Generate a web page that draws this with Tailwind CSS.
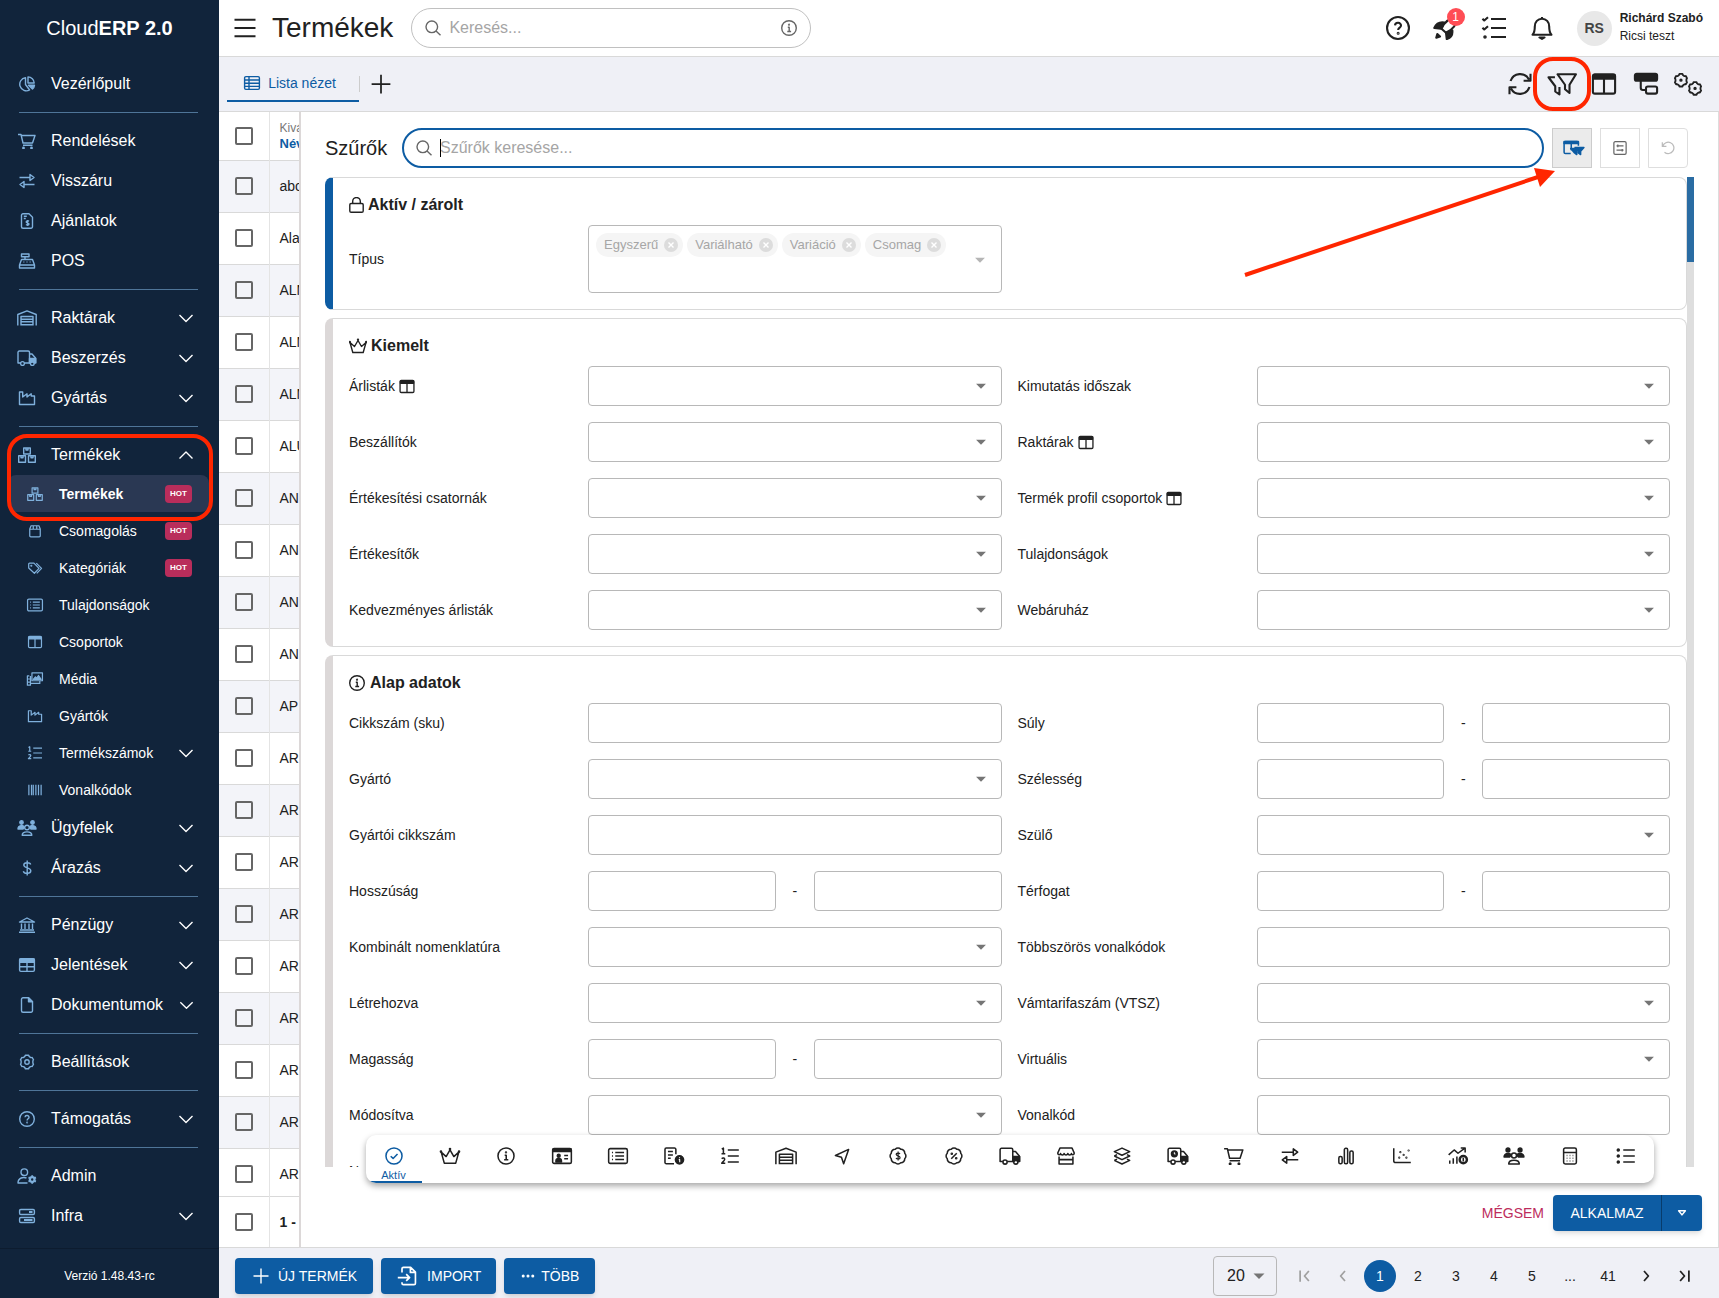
<!DOCTYPE html>
<html lang="hu">
<head>
    <meta charset="UTF-8">
    <meta name="viewport" content="width=device-width, initial-scale=1.0">
    <title>Termékek - CloudERP 2.0</title>
    <script src="https://cdn.jsdelivr.net/npm/@tailwindcss/browser@4"></script>
    <style>
        body {
            font-family: 'Liberation Sans', Arial, sans-serif;
        }
        .f {
            fill: currentColor;
        }
    </style>
</head>
<body class="h-screen flex overflow-hidden bg-white text-sm text-[#212121]">

    <!-- Icon set, every symbol sits on a 20x16 grid -->
    <svg class="hidden" xmlns="http://www.w3.org/2000/svg">
        <symbol id="i-pie" viewBox="0 0 20 16"><path d="M8.5 1.7A6.6 6.6 0 1 0 12.6 14L8.5 8.5z"/><path d="M11 .9V7h6.2A6.2 6.2 0 0 0 11 .9z"/><path class="f" d="M11.5 9.2H17.500a6 6 0 0 1-2 3.900z"/></symbol>
        <symbol id="i-cart" viewBox="0 0 20 16"><path d="M1 1.500h3l2 8.500h9.500l2.500-7.500H4.500M6 12.300h9.500"/><circle class="f" cx="6.500" cy="15" r=".7"/><circle class="f" cx="14.500" cy="15" r=".7"/></symbol>
        <symbol id="i-swap" viewBox="0 0 20 16"><path d="M2.500 4.500h10.500M13 1.500v6l4-3zM17.500 11.500H7M7 8.500v6l-4-3z"/></symbol>
        <symbol id="i-invoice" viewBox="0 0 20 16"><path d="M6 .8h6l3.500 3.400v9.500a1.500 1.500 0 0 1-1.500 1.500H6a1.500 1.500 0 0 1-1.500-1.500V2.300A1.500 1.500 0 0 1 6 .8zM6.800 3.200h3M6.800 5.500h2M12 8.200c-1-.7-2.800-.5-2.800.7s2.800.8 2.800 2.100-2 1.300-3 .5M10.600 7v6"/></symbol>
        <symbol id="i-pos" viewBox="0 0 20 16"><path d="M4.500 1h7.500v2.800H4.500zM8 3.800v2.700M4.500 6.500h11l2 5.500v3h-15v-3zM2.500 12h15M6.500 9h.8M9.600 9h.8M12.700 9h.8"/></symbol>
        <symbol id="i-warehouse" viewBox="0 0 20 16"><path d="M.8 15.500V4.500L10 .9l9.200 3.600v11M4 15.500V6.500h12v9M4.500 9.200h11M4.500 11.800h11M4 14.800h12"/></symbol>
        <symbol id="i-truck" viewBox="0 0 20 16"><path d="M3.500 13H1V2.300A1.300 1.300 0 0 1 2.300 1h8.900a1.300 1.300 0 0 1 1.300 1.300V13H7.500M12.500 4H15l3.500 4v5"/><path class="f" d="M12.500 8.500h6.300V13h-1.500a2.500 2.500 0 0 0-4 0h-.8z"/><circle cx="5.500" cy="13.500" r="1.900"/><circle cx="15.300" cy="13.500" r="1.900"/></symbol>
        <symbol id="i-factory" viewBox="0 0 20 16"><path d="M2.500 14.500V2h3.200v5L10 3.800V7l4.200-3.200V6h3.300v8.500z"/></symbol>
        <symbol id="i-boxes" viewBox="0 0 20 16"><path d="M6.700 1h6.600v6H6.700zM1.700 8.800h6.800v6.400H1.700zM11.500 8.800h6.800v6.400h-6.800zM9 1v2h2V1M4 8.800v2h2v-2M14 8.800v2h2v-2"/></symbol>
        <symbol id="i-package" viewBox="0 0 20 16"><path d="M4 5.800 5.500 2h9L16 5.800v7.700a1.200 1.200 0 0 1-1.200 1.200H5.200A1.200 1.200 0 0 1 4 13.500zM4 6h12M8 6V2.500M12 6V2.500"/></symbol>
        <symbol id="i-tags" viewBox="0 0 20 16"><path d="M2.800 3.500a1 1 0 0 1 1-1h5l5.800 6-5.300 5.500-6.500-6zM11.500 2.500l6 6-5.500 5.700"/><circle class="f" cx="5.800" cy="5.500" r=".5"/></symbol>
        <symbol id="i-listcard" viewBox="0 0 20 16"><rect x="1.500" y="1.300" width="17" height="13.400" rx="1.500"/><path d="M4.500 4.800h1M7.500 4.800h8M4.500 8h1M7.500 8h8M4.500 11.200h1M7.500 11.200h8"/></symbol>
        <symbol id="i-columns" viewBox="0 0 20 16"><rect x="2.600" y="1.600" width="14.800" height="12.800" rx="1.300"/><path class="f" d="M3 2h14v2.500H3z"/><path d="M10 4.500v10"/></symbol>
        <symbol id="i-media" viewBox="0 0 20 16"><path d="M6.500 1h12v9h-12zM3.500 4.500H1.300V15h3.500V4.500M1.300 8h3M1.300 11.500h3M4.800 13H15.500v-3"/><path class="f" d="M8 8.500l2.500-3 1.500 1.500 2-3 3 4.500z"/></symbol>
        <symbol id="i-numbers" viewBox="0 0 20 16"><path d="M8 2.500h10M8 8h10M8 13.500h10M2.500 1.700 4 .8v5M2.300 6h3.400M2.500 10.500c.8-1.200 3-.8 2.600.8-.2.900-1.500 1.900-2.600 3.200h3.200"/></symbol>
        <symbol id="i-barcode" viewBox="0 0 20 16"><path d="M3 2v12M6 2v12M8 2v12M11 2v12M14 2v12M17 2v12"/></symbol>
        <symbol id="i-users" viewBox="0 0 20 16"><circle class="f" cx="4.500" cy="2.500" r="1.700"/><circle class="f" cx="15.500" cy="2.500" r="1.700"/><path class="f" d="M1 9c0-4 6-4.500 6.200-1.500L6 9zM19 9c0-4-6-4.500-6.200-1.500L14 9z"/><circle cx="10" cy="7.500" r="2.300"/><path d="M5.200 15.200c0-4.500 9.600-4.500 9.600 0z"/></symbol>
        <symbol id="i-dollar" viewBox="0 0 20 16"><path d="M13.700 4.500C13 2.300 6.800 1.800 6.800 5c0 3.500 7 2.300 7 5.800 0 3.400-6.800 3.200-7.500.5M10.200.5v15"/></symbol>
        <symbol id="i-bank" viewBox="0 0 20 16"><path d="M2.500 5 10 1l7.500 4zM2 15.200h16M3 13h14M4.500 6.500V12M8 6.500V12M12 6.500V12M15.500 6.500V12"/></symbol>
        <symbol id="i-table" viewBox="0 0 20 16"><rect x="2.600" y="1.600" width="14.800" height="12.800" rx="1.300"/><path class="f" d="M3 2h14v3.200H3z"/><path d="M10 5v9.500M3 9.800h14"/></symbol>
        <symbol id="i-file" viewBox="0 0 20 16"><path d="M6 .8h5.500l4 4v8.900a1.500 1.500 0 0 1-1.500 1.500H6a1.500 1.500 0 0 1-1.500-1.500V2.300A1.500 1.500 0 0 1 6 .8z"/><path class="f" d="M11.500.8v4h4z"/></symbol>
        <symbol id="i-gear" viewBox="0 0 20 16"><path d="M16.500 5.800c-.9.700-.9 3.700 0 4.400l-1.300 2.300c-1.400-.5-3.300.6-3.600 2.300H8.400c-.3-1.700-2.200-2.800-3.600-2.300L3.500 10.200c.9-.7.900-3.700 0-4.400l1.300-2.300c1.400.5 3.300-.6 3.600-2.300h3.200c.3 1.700 2.200 2.800 3.600 2.300z"/><circle cx="10" cy="8" r="2.200"/></symbol>
        <symbol id="i-help" viewBox="0 0 20 16"><circle cx="10" cy="8" r="7.300"/><path d="M8 6.300c.2-2.600 4.200-2.200 4 .2-.1 1.300-1.900 1.300-1.900 2.900"/><circle class="f" cx="10.100" cy="11.500" r=".3"/></symbol>
        <symbol id="i-admin" viewBox="0 0 20 16"><circle cx="7.300" cy="4.200" r="3.300"/><path d="M10.500 15H1c0-5.500 5.500-6.200 8.500-5"/><circle cx="15.200" cy="11.500" r="2.300" stroke-width="2.200"/><path d="M15.200 7.300v1.500M15.200 14.200v1.500M11.500 9.400l1.400.8M17.500 12.800l1.400.8M11.500 13.600l1.400-.8M17.500 10.200l1.400-.8" stroke-width="1.800"/></symbol>
        <symbol id="i-server" viewBox="0 0 20 16"><rect x="2.600" y="1.500" width="14.800" height="5" rx="1.200"/><rect x="2.600" y="9.500" width="14.800" height="5" rx="1.200"/><path d="M12 4h3.500M7 12h8.500" stroke-width="2"/></symbol>
        <symbol id="i-info" viewBox="0 0 20 16"><circle cx="10" cy="8" r="7.300"/><path d="M8.800 7.300h1.400v4M8.300 11.500h3.800"/><circle class="f" cx="10" cy="4.700" r=".4"/></symbol>
        <symbol id="i-search" viewBox="0 0 20 16"><circle cx="8.800" cy="6.800" r="5.800"/><path d="m13 11 4.500 4.300"/></symbol>
        <symbol id="i-menu" viewBox="0 0 20 16"><path d="M3 2.500h14M3 8h14M3 13.500h14"/></symbol>
        <symbol id="i-rocket" viewBox="0 0 20 16"><path d="M7 8.500C9 4 13 1 17.500.8 17.300 5.500 14.500 9 10 11.200z"/><path class="f" d="M8.800 4.300C5.500 3.800 3.500 5 2.200 8l4.500.5zM14.200 9.500c.4 3-1 5-3.700 5.900l-.5-4.200zM3.500 14.500l.7-2.500 1.800 1.700z"/></symbol>
        <symbol id="i-checks" viewBox="0 0 20 16"><path d="M8 2h10M8 8h10M8 14h10M2.300 1.800l1.200 1.200L6 .8M2.300 7.800 3.500 9 6 6.800"/><circle class="f" cx="4" cy="14" r=".5"/></symbol>
        <symbol id="i-bell" viewBox="0 0 20 16"><path d="M3.700 12.500c1.500-1.500 1.500-3 1.500-5.500 0-3 2-5.200 4.800-5.200s4.800 2.200 4.800 5.200c0 2.500 0 4 1.500 5.500zM10 .6v1"/><path class="f" d="M8.300 14.300h3.400l-1.700 1z"/></symbol>
        <symbol id="i-list" viewBox="0 0 20 16"><rect x="2.600" y="1.600" width="14.800" height="12.800" rx="1.300"/><path d="M3 5h14M3 8.200h14M3 11.400h14M7 2v12.500"/></symbol>
        <symbol id="i-plus" viewBox="0 0 20 16"><path d="M10 .5v15M2.500 8h15"/></symbol>
        <symbol id="i-refresh" viewBox="0 0 20 16"><path d="M3.700 6A6.700 6.700 0 0 1 16 5M17 1.200v4.600h-4.600M16.300 10A6.700 6.700 0 0 1 4 11M3 14.800v-4.600h4.600"/></symbol>
        <symbol id="i-filter" viewBox="0 0 20 16"><path d="M7 1.500h12.300L15 8.500V14l-3-2.500v-3zM5.300 3.500H1L5.500 9.500V13l2.800 2V10"/></symbol>
        <symbol id="i-group" viewBox="0 0 20 16"><rect class="f" x="2.600" y="1.200" width="14.800" height="4.600" rx="1.200"/><path d="M6.500 6v4.500a1.500 1.500 0 0 0 1.500 1.500h2"/><rect x="10" y="9.700" width="7.400" height="4.700" rx="1.200"/></symbol>
        <symbol id="i-gears" viewBox="0 0 20 16"><g transform="translate(-.9 .5) scale(.62)" stroke-width="2"><path d="M16.500 5.800c-.9.700-.9 3.700 0 4.400l-1.300 2.300c-1.400-.5-3.300.6-3.600 2.300H8.400c-.3-1.700-2.200-2.800-3.600-2.300L3.500 10.200c.9-.7.900-3.700 0-4.400l1.300-2.300c1.400.5 3.300-.6 3.600-2.300h3.200c.3 1.700 2.200 2.800 3.600 2.300z"/><circle class="f" cx="10" cy="8" r=".8"/></g><g transform="translate(8.500 6) scale(.62)" stroke-width="2"><path d="M16.500 5.800c-.9.700-.9 3.700 0 4.400l-1.300 2.300c-1.400-.5-3.300.6-3.600 2.300H8.400c-.3-1.700-2.200-2.800-3.600-2.300L3.500 10.200c.9-.7.900-3.700 0-4.400l1.300-2.300c1.400.5 3.300-.6 3.600-2.300h3.200c.3 1.700 2.200 2.800 3.600 2.300z"/><circle class="f" cx="10" cy="8" r=".8"/></g></symbol>
        <symbol id="i-colfilter" viewBox="0 0 20 16"><path d="M7 13H2.200A1.200 1.200 0 0 1 1 11.800V3.200A1.200 1.200 0 0 1 2.200 2h10.600A1.200 1.200 0 0 1 14 3.200V6M7.500 4v6"/><path class="f" d="M1 2h13v2H1zM11 7.500h8l-3 3.500v3l-2-1.500V11zM7 8.500h3l2.500 3V14l-2-1.500z"/></symbol>
        <symbol id="i-sliders" viewBox="0 0 20 16"><rect x="3" y=".8" width="14" height="14.400" rx="1.500"/><path d="M6 5.500h8M6 10.500h8M7.500 4v3M12.500 9v3"/></symbol>
        <symbol id="i-undo" viewBox="0 0 20 16"><path d="M3.500 1.500v4.700h4.700M4 6a6.500 6.500 0 1 1 2 6.800"/></symbol>
        <symbol id="i-lock" viewBox="0 0 20 16"><rect x="2.800" y="6.500" width="13.400" height="8.700" rx="1.300"/><path d="M5.700 6.500V4.300a3.800 3.800 0 0 1 7.600 0v2.200"/></symbol>
        <symbol id="i-crown" viewBox="0 0 20 16"><path d="M4.800 14.500 2 4.500l4.500 4L10 2.500l3.500 6 4.500-4-2.800 10z"/><circle class="f" cx="1.800" cy="4" r=".5"/><circle class="f" cx="10" cy="1.600" r=".5"/><circle class="f" cx="18.200" cy="4" r=".5"/></symbol>
        <symbol id="i-check" viewBox="0 0 20 16"><circle cx="10" cy="8" r="7.300"/><path d="m7 8.200 2.200 2 4-4"/></symbol>
        <symbol id="i-idcard" viewBox="0 0 20 16"><rect x="1.500" y="1.300" width="17" height="13.400" rx="1.300"/><path class="f" d="M2 1.500h16V4H2z"/><circle class="f" cx="7" cy="7.800" r="1.300"/><path class="f" d="M4.500 12.500c0-3 5-3 5 0zM4.500 12.500h5v1h-5z"/><path d="M12 7.500h3.500M12 10.500h3.500"/></symbol>
        <symbol id="i-docinfo" viewBox="0 0 20 16"><path d="M10 15H3a1.200 1.200 0 0 1-1.200-1.200V2A1.200 1.200 0 0 1 3 .8h7.500A1.200 1.200 0 0 1 11.700 2v4.500M4.500 4h4.500M4.500 7h4.500M4.500 10H7"/><path class="f" d="M15 7.800a3.700 3.700 0 1 1 0 7.400 3.700 3.700 0 0 1 0-7.400z"/><path stroke="#fff" stroke-width="1" d="M15 9.200v.8M14.300 11.300h.9v2.300"/></symbol>
        <symbol id="i-send" viewBox="0 0 20 16"><path d="M16 2 4 7.500l5.500 1.700L11.500 15z"/></symbol>
        <symbol id="i-badge" viewBox="0 0 20 16"><path d="M16.100 5.500a3.400 3.400 0 0 1 0 5 3.400 3.400 0 0 1-3.600 3.600 3.400 3.400 0 0 1-5 0 3.400 3.400 0 0 1-3.600-3.600 3.400 3.400 0 0 1 0-5 3.400 3.400 0 0 1 3.600-3.600 3.400 3.400 0 0 1 5 0 3.400 3.400 0 0 1 3.600 3.600z"/><path stroke-width="1.100" d="M11.800 6.300C11.300 5 8.300 5 8.300 6.500c0 1.700 3.600 1.200 3.600 3 0 1.600-3.200 1.600-3.700.2M10.100 4v8"/></symbol>
        <symbol id="i-percent" viewBox="0 0 20 16"><path d="M16.100 5.500a3.400 3.400 0 0 1 0 5 3.400 3.400 0 0 1-3.600 3.600 3.400 3.400 0 0 1-5 0 3.400 3.400 0 0 1-3.600-3.600 3.400 3.400 0 0 1 0-5 3.400 3.400 0 0 1 3.600-3.600 3.400 3.400 0 0 1 5 0 3.400 3.400 0 0 1 3.600 3.600zM12.500 5.500l-5 5"/><circle class="f" cx="8" cy="6" r=".5"/><circle class="f" cx="12" cy="10" r=".5"/></symbol>
        <symbol id="i-store" viewBox="0 0 20 16"><path d="M4.500.8h11l2 4.500c-.3 2-2.200 2-2.500.5-.6 1.700-2.800 1.700-3.300 0-.6 1.700-2.800 1.700-3.400 0-.5 1.700-2.700 1.700-3.300 0-.3 1.500-2.200 1.500-2.500-.5zM3.700 8.500v6.700h12.600V8.500M3.700 11.300h12.600"/></symbol>
        <symbol id="i-layers" viewBox="0 0 20 16"><path d="M10 .8 17 4l-7 3.300L3 4zM3 8l7 3.300L17 8l-2.500-1.200M5.500 6.800 3 8M3 12l7 3.300L17 12l-2.500-1.200M5.500 10.800 3 12"/></symbol>
        <symbol id="i-cart-truck" viewBox="0 0 20 16"><path d="M3.500 13H1V2.300A1.300 1.300 0 0 1 2.300 1h8.900a1.300 1.300 0 0 1 1.300 1.300V13H7.500M12.500 4H15l3.500 4v5"/><path class="f" d="M12.500 8.500h6.300V13h-1.500a2.500 2.500 0 0 0-4 0h-.8z"/><circle class="f" cx="6.700" cy="6" r="2.600"/><path stroke="#fff" stroke-width=".9" d="M6.700 4.600v1.600h1"/><circle cx="5.500" cy="13.500" r="1.900"/><circle cx="15.300" cy="13.500" r="1.900"/></symbol>
        <symbol id="i-bars" viewBox="0 0 20 16"><rect x="3.500" y="8.500" width="3" height="6.500" rx="1.300"/><rect x="8.500" y="1" width="3" height="14" rx="1.300"/><rect x="13.500" y="3.500" width="3" height="11.500" rx="1.300"/></symbol>
        <symbol id="i-scatter" viewBox="0 0 20 16"><path d="M2.500 1v11.500A1.500 1.500 0 0 0 4 14h14"/><circle class="f" cx="7.500" cy="9.500" r=".3"/><circle class="f" cx="8.500" cy="4.500" r=".3"/><circle class="f" cx="11.500" cy="7" r=".3"/><circle class="f" cx="14" cy="9.500" r=".3"/><circle class="f" cx="16" cy="3" r=".3"/></symbol>
        <symbol id="i-trend" viewBox="0 0 20 16"><path d="M1.500 7 6.500 2.500l3.500 3 6-4.500M12.500.8h4v4M2.500 12v3M5.700 10v5M9 8.500V15"/><circle cx="14.800" cy="11.300" r="3.300" stroke-width="2.200"/><path d="M14.800 9.500v3.600"/></symbol>
        <symbol id="i-calc" viewBox="0 0 20 16"><rect x="4.200" y=".8" width="11.600" height="14.400" rx="1.500"/><path d="M4.500 4.800h11M7 7.500h.6M9.700 7.500h.6M12.400 7.500h.6M7 10h.6M9.700 10h.6M12.400 10h.6M7 12.500h.6M9.700 12.500h.6M12.400 12.500h.6"/></symbol>
        <symbol id="i-bullets" viewBox="0 0 20 16"><path d="M7.500 2.500h10.500M7.500 8h10.500M7.500 13.500h10.500"/><circle class="f" cx="3" cy="2.500" r=".9"/><circle class="f" cx="3" cy="8" r=".9"/><circle class="f" cx="3" cy="13.500" r=".9"/></symbol>
        <symbol id="i-down" viewBox="0 0 20 16"><path d="m3.500 5 6.500 6.500L16.500 5"/></symbol>
        <symbol id="i-up" viewBox="0 0 20 16"><path d="m3.500 11.500 6.500-6.500 6.500 6.500"/></symbol>
        <symbol id="i-left" viewBox="0 0 20 16"><path d="M12 4 8.500 8l3.500 4"/></symbol>
        <symbol id="i-right" viewBox="0 0 20 16"><path d="M8 4 11.500 8 8 12"/></symbol>
        <symbol id="i-first" viewBox="0 0 20 16"><path d="M6.500 3.500v9M13.500 4 10 8l3.500 4"/></symbol>
        <symbol id="i-last" viewBox="0 0 20 16"><path d="M13.500 3.500v9M6.500 4 10 8l-3.500 4"/></symbol>
        <symbol id="i-import" viewBox="0 0 20 16"><path d="M5 5V2A1.200 1.200 0 0 1 6.200.8h6l4 4V14a1.200 1.200 0 0 1-1.200 1.200H6.200A1.200 1.200 0 0 1 5 14v-.7M1.500 9.300H11M8.500 6.500l2.800 2.800-2.800 2.800M12 1v4h4"/></symbol>
        <symbol id="i-dots" viewBox="0 0 20 16"><circle class="f" cx="4" cy="8" r="1.200"/><circle class="f" cx="10" cy="8" r="1.200"/><circle class="f" cx="16" cy="8" r="1.200"/></symbol>
        <symbol id="i-caret" viewBox="0 0 20 16"><path class="f" stroke="none" d="M4.500 5.500h11L10 11z"/></symbol>
        <symbol id="i-caret-o" viewBox="0 0 20 16"><path d="M5.500 5h9L10 10.500z" stroke-width="2"/></symbol>
    </svg>

    <!-- Sidebar -->
    <aside class="w-[219px] shrink-0 flex flex-col bg-[#11243b] text-white">
        <h1 class="h-16 pt-3 text-center text-xl leading-8">Cloud<b>ERP 2.0</b></h1>
        <nav id="menu" class="flex-1 text-base"></nav>
        <p class="h-[50px] flex items-center justify-center border-t border-black/20 pt-1 text-xs">Verzió 1.48.43-rc</p>
    </aside>

    <div class="flex-1 min-w-0 flex flex-col">
        <!-- Header -->
        <header class="h-[57px] shrink-0 flex items-center border-b border-[#d9d9d9] pl-[11px] pr-4">
            <button type="button" aria-label="Menü"><svg class="w-[30px] h-6"><use href="#i-menu"/></svg></button>
            <h2 class="ml-3 text-[28px] leading-10">Termékek</h2>
            <div class="relative ml-[18px] w-[400px] text-[#666]">
                <svg class="absolute left-3 top-3 w-5 h-4"><use href="#i-search"/></svg>
                <input type="text" aria-label="Keresés" placeholder="Keresés..." class="w-full h-10 rounded-full border border-[#c0c0c0] pl-[37px] pr-10 text-base placeholder-[#a5a5a5] outline-none">
                <svg class="absolute right-3 top-3 w-5 h-4"><use href="#i-info"/></svg>
            </div>
            <div class="ml-auto mr-5 flex gap-[18px]">
                <button type="button" aria-label="Súgó"><svg class="w-[30px] h-6"><use href="#i-help"/></svg></button>
                <button type="button" aria-label="Újdonságok" class="relative">
                    <svg class="w-[30px] h-6"><use href="#i-rocket"/></svg>
                    <span class="absolute -top-2 -right-1 size-[18px] rounded-full bg-[#ff4d55] text-xs leading-[18px] text-white">1</span>
                </button>
                <button type="button" aria-label="Feladatok"><svg class="w-[30px] h-6"><use href="#i-checks"/></svg></button>
                <button type="button" aria-label="Értesítések"><svg class="w-[30px] h-6"><use href="#i-bell"/></svg></button>
            </div>
            <span class="size-[35px] flex items-center justify-center rounded-full bg-[#e8e8e8] font-bold text-[#444]">RS</span>
            <div class="ml-2 pb-0.5 text-xs leading-[18px]">
                <p class="font-bold">Richárd Szabó</p>
                <p>Ricsi teszt</p>
            </div>
        </header>

        <!-- View tabs and table tools -->
        <div class="h-[55px] shrink-0 flex items-center border-b border-[#d9d9d9] bg-[#eff0f6] pl-2 pr-4">
            <button type="button" class="w-[132px] h-9 flex items-center justify-center gap-[6px] border-b-2 border-[#0d5ca3] pr-2 text-[#0d5ca3]">
                <svg class="w-5 h-4"><use href="#i-list"/></svg>Lista nézet
            </button>
            <span class="h-4 border-l border-[#ccc]"></span>
            <button type="button" aria-label="Új nézet" class="ml-2"><svg class="w-[26px] h-5"><use href="#i-plus"/></svg></button>
            <div class="ml-auto flex gap-3">
                <button type="button" aria-label="Frissítés"><svg class="w-[30px] h-6"><use href="#i-refresh"/></svg></button>
                <button type="button" aria-label="Szűrők" class="relative">
                    <svg class="w-[30px] h-6"><use href="#i-filter"/></svg>
                    <span class="absolute -inset-x-[14px] -inset-y-[15px] rounded-[20px] border-4 border-[#ff2600]"></span>
                </button>
                <button type="button" aria-label="Oszlopok"><svg class="w-[30px] h-6"><use href="#i-columns"/></svg></button>
                <button type="button" aria-label="Csoportosítás"><svg class="w-[30px] h-6"><use href="#i-group"/></svg></button>
                <button type="button" aria-label="Beállítások"><svg class="w-[30px] h-6"><use href="#i-gears"/></svg></button>
            </div>
        </div>

        <div class="relative flex-1 min-h-0 flex">
            <!-- Product table, mostly covered by the filter drawer -->
            <div class="w-20 shrink-0 flex flex-col">
                <div class="flex-1 min-h-0 overflow-hidden">
                    <table class="w-full table-fixed whitespace-nowrap">
                        <thead>
                            <tr class="h-12 border-b border-[#d9d9d9]">
                                <th class="w-[50px] border-r border-[#e4e4e4]"><input type="checkbox" aria-label="Összes kijelölése" class="block mx-auto size-[18px] appearance-none rounded-xs border-2 border-[#666]"></th>
                                <th class="overflow-hidden pl-[10px] text-left leading-4">
                                    <span class="block text-xs font-normal text-[#777]">Kiválasztott</span>
                                    <span class="block text-[13px] text-[#0d5ca3]">Név</span>
                                </th>
                            </tr>
                        </thead>
                        <tbody id="rows"></tbody>
                    </table>
                </div>
                <table class="w-full table-fixed whitespace-nowrap">
                    <tbody>
                        <tr class="h-[51px] border-t border-[#d9d9d9] bg-white">
                            <td class="w-[50px] border-r border-[#e4e4e4]"><input type="checkbox" aria-label="Összesítő sor" class="block mx-auto size-[18px] appearance-none rounded-xs border-2 border-[#666]"></td>
                            <td class="overflow-hidden pl-[10px] font-bold">1 -</td>
                        </tr>
                    </tbody>
                </table>
            </div>

            <!-- Filter drawer -->
            <section class="relative flex-1 min-w-0 flex flex-col border-l-2 border-r border-l-[#dcd8d8] border-r-[#ddd] bg-white pt-4 pb-4 pl-6">
                <div class="flex items-center gap-2 pr-[30px]">
                    <h3 class="mr-[5px] w-16 text-xl">Szűrők</h3>
                    <div class="relative flex-1 text-[#666]">
                        <svg class="absolute left-3 top-3 w-5 h-4"><use href="#i-search"/></svg>
                        <input type="text" aria-label="Szűrők keresése" placeholder="Szűrők keresése..." class="w-full h-10 rounded-full border-2 border-[#0d5ca3] pl-9 pr-4 text-base placeholder-[#a5a5a5] outline-none">
                        <span class="absolute left-[38px] top-[11px] h-[18px] w-px bg-black"></span>
                    </div>
                    <button type="button" aria-label="Oszlop szűrők" class="size-10 flex items-center justify-center border border-[#ccc] bg-[#ebebeb] pl-1 text-[#0d5ca3]"><svg class="w-[22px] h-[18px]"><use href="#i-colfilter"/></svg></button>
                    <button type="button" aria-label="Szűrő beállítások" class="size-10 flex items-center justify-center border border-[#dedede] text-[#666]"><svg class="w-[18px] h-[14px]"><use href="#i-sliders"/></svg></button>
                    <button type="button" aria-label="Visszaállítás" class="size-10 flex items-center justify-center rounded-r-sm border border-[#dedede] text-[#bbb]"><svg class="w-[18px] h-[14px]"><use href="#i-undo"/></svg></button>
                </div>

                <div class="mt-[9px] mr-6 flex-1 min-h-0 flex">
                    <div class="flex-1 flex flex-col gap-2 overflow-y-auto [scrollbar-width:none]">
                        <div class="shrink-0 rounded-lg border border-l-8 border-[#d9d9d9] border-l-[#0d5ca3] px-4 pb-4">
                            <h4 class="h-[47px] flex items-center gap-[3px] pt-[6px] text-base font-bold"><svg class="w-4 h-4" viewBox="2 0 16 16"><use href="#i-lock" width="20" height="16"/></svg>Aktív / zárolt</h4>
                            <div class="grid grid-cols-2 gap-4">
                                <div class="flex items-center">
                                    <span id="type-label" class="w-[239px] shrink-0">Típus</span>
                                    <div role="group" aria-labelledby="type-label" class="relative flex-1 h-[68px] flex items-start gap-1 rounded-sm border border-[#b8b8b8] p-[7px] text-[13px] text-[#a6a6a6]" id="chips"></div>
                                </div>
                            </div>
                        </div>
                        <div class="shrink-0 rounded-lg border border-l-8 border-[#d9d9d9] border-l-[#dcd8d8] px-4 pb-4">
                            <h4 class="h-[47px] flex items-center gap-1 pt-[6px] text-base font-bold"><svg class="w-[18px] h-4" viewBox="1 0 18 16"><use href="#i-crown" width="20" height="16"/></svg>Kiemelt</h4>
                            <div id="featured" class="grid grid-cols-2 gap-4"></div>
                        </div>
                        <div class="shrink-0 rounded-lg border border-l-8 border-[#d9d9d9] border-l-[#dcd8d8] px-4 pb-4">
                            <h4 class="h-[47px] flex items-center gap-[5px] pt-[6px] text-base font-bold"><svg class="w-4 h-4" viewBox="2 0 16 16"><use href="#i-info" width="20" height="16"/></svg>Alap adatok</h4>
                            <div id="basic" class="grid grid-cols-2 gap-4"></div>
                        </div>
                    </div>
                    <div class="w-[7px] bg-[#dedede]"><div class="h-[85px] bg-[#2a6ca3]"></div></div>
                </div>

                <div class="mt-7 mr-4 flex items-center justify-end">
                    <button type="button" class="px-[9px] text-[#bd2c5c]">MÉGSEM</button>
                    <div class="h-9 flex rounded-sm bg-[#0d5ca3] text-white shadow-md">
                        <button type="button" class="w-[109px] border-r border-[#083c6b]">ALKALMAZ</button>
                        <button type="button" aria-label="További műveletek" class="w-10 flex items-center justify-center"><svg class="w-4 h-3"><use href="#i-caret-o"/></svg></button>
                    </div>
                </div>

                <!-- Section shortcuts -->
                <div id="shortcuts" class="absolute bottom-16 left-1/2 -translate-x-1/2 h-12 flex overflow-hidden rounded-[10px] bg-white shadow-[0_3px_6px_rgba(0,0,0,0.35)]"></div>
            </section>

            <!-- Pointer to the column filter button -->
            <svg class="absolute right-[160px] top-[50px] w-[320px] h-[120px] pointer-events-none" viewBox="0 0 320 120">
                <path d="M6 113 302 14" fill="none" stroke="#ff2600" stroke-width="4"/>
                <path d="M295 6 316 9 301 25z" fill="#ff2600" stroke="none"/>
            </svg>
        </div>

        <!-- Footer -->
        <footer class="h-[51px] shrink-0 flex items-center gap-2 border-t border-[#d9d9d9] bg-[#eff0f6] pl-4 pr-4 pt-[6px]">
            <button type="button" class="h-9 flex items-center gap-[7px] rounded-sm bg-[#0d5ca3] px-4 text-white shadow-md"><svg class="w-5 h-4"><use href="#i-plus"/></svg>ÚJ TERMÉK</button>
            <button type="button" class="h-9 flex items-center gap-[7px] rounded-sm bg-[#0d5ca3] px-[15px] text-white shadow-md"><svg class="w-6 h-5"><use href="#i-import"/></svg>IMPORT</button>
            <button type="button" class="h-9 flex items-center gap-[5px] rounded-sm bg-[#0d5ca3] px-4 text-white shadow-md"><svg class="w-4 h-4"><use href="#i-dots"/></svg>TÖBB</button>
            <div class="relative ml-auto">
                <select aria-label="Sorok száma" class="w-16 h-10 appearance-none rounded-sm border border-[#b8b8b8] pl-[13px] text-base outline-none"><option>20</option><option>50</option></select>
                <svg class="absolute right-2 top-3 w-5 h-4 text-[#757575] pointer-events-none"><use href="#i-caret"/></svg>
            </div>
            <nav id="pages" class="flex"></nav>
        </footer>
    </div>

    <script>
        const icon = (name, cls) => `<svg class="${cls}"><use href="#i-${name}"/></svg>`;

        // --- Sidebar: [icon, label, arrow], null is a divider ---
        const menu = [
            ['pie', 'Vezérlőpult'], null,
            ['cart', 'Rendelések'], ['swap', 'Visszáru'], ['invoice', 'Ajánlatok'], ['pos', 'POS'], null,
            ['warehouse', 'Raktárak', 'down'], ['truck', 'Beszerzés', 'down'], ['factory', 'Gyártás', 'down'], null,
            ['boxes', 'Termékek', 'up'], ['users', 'Ügyfelek', 'down'], ['dollar', 'Árazás', 'down'], null,
            ['bank', 'Pénzügy', 'down'], ['table', 'Jelentések', 'down'], ['file', 'Dokumentumok', 'down'], null,
            ['gear', 'Beállítások'], null,
            ['help', 'Támogatás', 'down'], null,
            ['admin', 'Admin'], ['server', 'Infra', 'down'],
        ];
        // [icon, label, hot, arrow]
        const submenu = [
            ['boxes', 'Termékek', true], ['package', 'Csomagolás', true], ['tags', 'Kategóriák', true],
            ['listcard', 'Tulajdonságok'], ['columns', 'Csoportok'], ['media', 'Média'], ['factory', 'Gyártók'],
            ['numbers', 'Termékszámok', false, 'down'], ['barcode', 'Vonalkódok'],
        ];

        const subItem = ([name, label, hot, arrow], i) => `
            <a href="#" class="${i === 0 ? 'bg-[#2a3853] font-bold' : ''} ml-2 mr-[10px] h-[37px] flex items-center gap-[15px] rounded-lg pl-[18px] pr-[17px] text-sm">
                ${icon(name, 'w-[18px] h-[14px] shrink-0 text-[#7fb0dc]')}<span class="flex-1">${label}</span>
                ${hot ? '<span class="w-[27px] h-[18px] rounded-sm bg-[#b92d5b] text-center text-[8px] leading-[18px] font-bold">HOT</span>' : ''}
                ${arrow ? icon(arrow, 'w-5 h-4 -mr-1') : ''}
            </a>`;

        document.getElementById('menu').innerHTML = menu.map((item) => {
            if (!item) return '<hr class="my-2 ml-[19px] mr-[21px] border-[#4f7598]">';
            const [name, label, arrow] = item;
            const link = `
                <a href="#" class="h-10 flex items-center gap-[14px] pl-[17px] pr-[23px]">
                    ${icon(name, 'w-5 h-4 shrink-0 text-[#7fb0dc]')}<span class="flex-1">${label}</span>
                    ${arrow ? icon(arrow, 'w-5 h-4') : ''}
                </a>`;
            if (arrow !== 'up') return link;
            return `<div class="relative">${link}${submenu.map(subItem).join('')}
                <span class="absolute left-[7px] right-[6px] -top-px h-[87px] rounded-[20px] border-4 border-[#ff2600] pointer-events-none"></span></div>`;
        }).join('');

        // --- Table rows ---
        const names = ['abc', 'Alap', 'ALM', 'ALM', 'ALM', 'ALU', 'AN', 'AN', 'AN', 'AN', 'AP', 'AR', 'AR', 'AR', 'AR', 'AR', 'AR', 'AR', 'AR', 'AR'];
        document.getElementById('rows').innerHTML = names.map((name) => `
            <tr class="h-[52px] border-b border-[#d9d9d9] odd:bg-[#f3f4f9]">
                <td class="border-r border-[#e4e4e4]"><input type="checkbox" aria-label="${name}" class="block mx-auto size-[18px] appearance-none rounded-xs border-2 border-[#666]"></td>
                <td class="overflow-hidden pl-[10px]">${name}</td>
            </tr>`).join('');

        // --- Filters: [label, type, column icon] ---
        const featured = [
            ['Árlisták', 'select', true], ['Kimutatás időszak', 'select'],
            ['Beszállítók', 'select'], ['Raktárak', 'select', true],
            ['Értékesítési csatornák', 'select'], ['Termék profil csoportok', 'select', true],
            ['Értékesítők', 'select'], ['Tulajdonságok', 'select'],
            ['Kedvezményes árlisták', 'select'], ['Webáruház', 'select'],
        ];
        const basic = [
            ['Cikkszám (sku)', 'text'], ['Súly', 'range'],
            ['Gyártó', 'select'], ['Szélesség', 'range'],
            ['Gyártói cikkszám', 'text'], ['Szülő', 'select'],
            ['Hosszúság', 'range'], ['Térfogat', 'range'],
            ['Kombinált nomenklatúra', 'select'], ['Többszörös vonalkódok', 'text'],
            ['Létrehozva', 'select'], ['Vámtarifaszám (VTSZ)', 'select'],
            ['Magasság', 'range'], ['Virtuális', 'select'],
            ['Módosítva', 'select'], ['Vonalkód', 'text'],
            ['Nem', 'text'],
        ];
        const input = (id, extra) => `<input type="text" id="${id}" ${extra} class="flex-1 min-w-0 h-10 rounded-sm border border-[#b8b8b8] px-3 outline-none">`;
        const control = {
            text: (id) => input(id, ''),
            range: (id, label) => `${input(id, '')}<span class="w-[38px] text-center">-</span>${input(id + '-max', `aria-label="${label} maximum"`)}`,
            select: (id) => `<select id="${id}" class="w-full h-10 appearance-none rounded-sm border border-[#b8b8b8] px-3 outline-none"><option></option></select>
                ${icon('caret', 'absolute right-3 top-3 w-[18px] h-4 text-[#757575] pointer-events-none')}`,
        };
        const field = (prefix) => ([label, type, col], i) => `
            <div class="min-w-0 flex items-center">
                <label for="${prefix}${i}" class="w-[239px] shrink-0 flex items-center gap-0.5">${label}${col ? icon('columns', 'w-5 h-[15px]') : ''}</label>
                <div class="relative flex-1 min-w-0 flex items-center">${control[type](prefix + i, label)}</div>
            </div>`;
        document.getElementById('featured').innerHTML = featured.map(field('f')).join('');
        document.getElementById('basic').innerHTML = basic.map(field('b')).join('');

        document.getElementById('chips').innerHTML = ['Egyszerű', 'Variálható', 'Variáció', 'Csomag'].map((name) => `
            <span class="h-6 flex items-center gap-[6px] rounded-full bg-[#f5f5f5] pl-2 pr-[5px]">${name}
                <button type="button" disabled aria-label="${name} törlése" class="size-[14px] rounded-full bg-[#dcdcdc] text-white">
                    <svg class="size-[14px]" viewBox="0 0 14 14"><path d="m4.500 4.500 5 5m0-5-5 5"/></svg>
                </button>
            </span>`).join('') + icon('caret', 'absolute right-3 top-[26px] w-[18px] h-4 text-[#b5b5b5]');

        // --- Section shortcuts ---
        const shortcuts = ['check', 'crown', 'info', 'idcard', 'listcard', 'docinfo', 'numbers', 'warehouse', 'send', 'badge', 'percent', 'truck',
            'store', 'layers', 'cart-truck', 'cart', 'swap', 'bars', 'scatter', 'trend', 'users', 'calc', 'bullets'];
        document.getElementById('shortcuts').innerHTML = shortcuts.map((name, i) => `
            <button type="button" aria-label="${name}" class="${i === 0 ? 'border-b-2 border-[#0d5ca3] text-[#0d5ca3]' : ''} w-14 h-12 flex flex-col items-center pt-3 text-[11px] leading-5">
                ${icon(name, 'w-[22px] h-[18px] shrink-0')}${i === 0 ? '<span>Aktív</span>' : ''}
            </button>`).join('');

        // --- Pagination ---
        const pages = ['first', 'left', '1', '2', '3', '4', '5', '...', '41', 'right', 'last'];
        document.getElementById('pages').innerHTML = pages.map((page, i) => {
            const label = /[a-z]/.test(page) ? icon(page, 'w-[25px] h-5') : page;
            return `<button type="button" aria-label="${page}" class="${page === '1' ? 'bg-[#0d5ca3] text-white' : ''} ${i < 2 ? 'text-[#a0a0a0]' : ''} mx-[3px] size-8 flex items-center justify-center rounded-full">${label}</button>`;
        }).join('');

        document.querySelectorAll('svg').forEach((svg) => {
            svg.setAttribute('fill', 'none');
            svg.setAttribute('stroke', 'currentColor');
            svg.setAttribute('stroke-width', '1.4');
            svg.setAttribute('stroke-linejoin', 'round');
        });
    </script>
</body>
</html>
